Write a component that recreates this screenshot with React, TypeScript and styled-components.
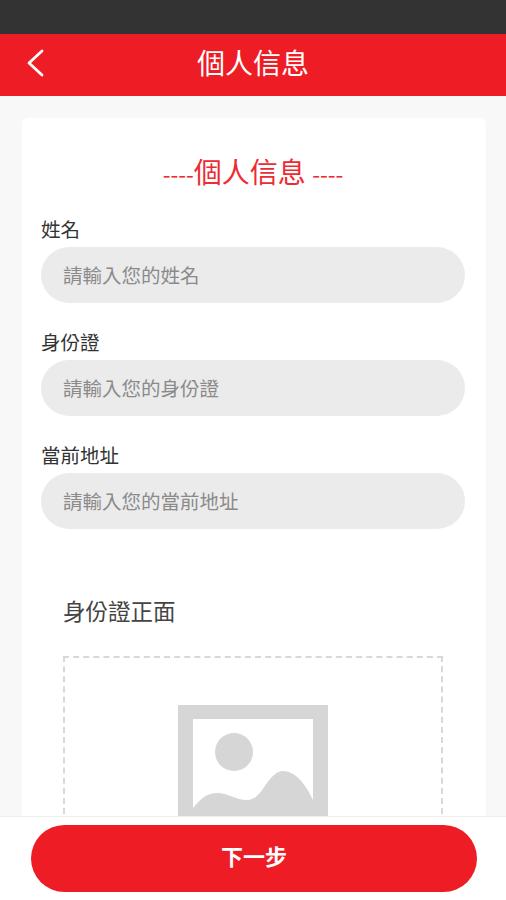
import React from "react";
import styled, { createGlobalStyle } from "styled-components";

const Global = createGlobalStyle`
  html, body { margin: 0; padding: 0; background: #f8f8f8; }
  * { box-sizing: border-box; }
`;
const FONT = `"Noto Sans CJK TC", "Noto Sans CJK SC", "Liberation Sans", sans-serif`;

const Page = styled.div`
  width: 506px; height: 900px; display: flex; flex-direction: column;
  overflow: hidden; background: #f8f8f8; font-family: ${FONT};
`;
const StatusBar = styled.div`flex: 0 0 34px; background: #333333;`;
const Header = styled.header`
  flex: 0 0 62px; background: #ee1c25; display: grid;
  grid-template-columns: 72px 1fr 72px; align-items: center;
`;
const BackButton = styled.div`display: flex; padding: 0 0 5px 25px; align-items: center;`;
const HeaderTitle = styled.h1`
  margin: 0; text-align: center; color: #fff; font-size: 28px; font-weight: 400;
  line-height: 36px; padding-bottom: 6px;
`;
const Scroll = styled.main`flex: 1 1 auto; min-height: 0; overflow: hidden; padding: 22px 20px 0 22px;`;
const Card = styled.section`
  background: #fff; border-radius: 6px; padding: 34px 21px 40px 19px;
`;
const CardTitle = styled.h2`
  margin: 0 0 22px; text-align: center; color: #ee2a33; font-size: 28px; font-weight: 400; line-height: 38px;
`;
const Dashes = styled.span`font-size: 22.5px;`;
const Field = styled.div`margin-bottom: 24px;`;
const Label = styled.div`color: #333; font-size: 19.5px; line-height: 30px; height: 33px;`;
const Input = styled.div`
  height: 56px; border-radius: 28px; background: #ebebeb; color: #8a8a8a;
  font-size: 19.5px; display: flex; align-items: center; padding: 0 22px 2px;
`;
const Upload = styled.div`margin: 65px 0 0 22px; width: 380px;`;
const UploadTitle = styled.div`color: #444; font-size: 22.5px; line-height: 32px; margin-bottom: 30px;`;
const DropZone = styled.div`
  height: 300px; border: 2px dashed #d8d8d8; display: flex; justify-content: center; padding-top: 47px;
`;
const Footer = styled.footer`
  flex: 0 0 84px; background: #fff; border-top: 1px solid #eeeeee; padding: 8px 29px 0 31px;
`;
const NextButton = styled.button`
  width: 100%; height: 67px; border: 0; border-radius: 34px; background: #ee1c25; color: #fff;
  font-family: ${FONT}; font-size: 22px; font-weight: 700; padding: 0 0 7px;
`;

const fields = [
  ["姓名", "請輸入您的姓名"],
  ["身份證", "請輸入您的身份證"],
  ["當前地址", "請輸入您的當前地址"],
];

export default function App() {
  return (
    <Page>
      <Global />
      <StatusBar />
      <Header>
        <BackButton>
          <svg width="20" height="30" viewBox="0 0 20 30" fill="none">
            <path d="M17 3 L4 15 L17 27" stroke="#fff" strokeWidth="2.8" strokeLinecap="round" strokeLinejoin="round" />
          </svg>
        </BackButton>
        <HeaderTitle>個人信息</HeaderTitle>
      </Header>
      <Scroll>
        <Card>
          <CardTitle><Dashes>----</Dashes>個人信息 <Dashes>----</Dashes></CardTitle>
          {fields.map(([label, placeholder]) => (
            <Field key={label}>
              <Label>{label}</Label>
              <Input>{placeholder}</Input>
            </Field>
          ))}
          <Upload>
            <UploadTitle>身份證正面</UploadTitle>
            <DropZone>
              <svg width="150" height="150" viewBox="0 0 150 150">
                <path fillRule="evenodd" fill="#d6d6d6" d="M0 0H150V150H0Z M15 14V103C23 93 30 88 39 88C50 88 58 95 69 95C79 95 83 86 89 78C94 71 99 66 105 66C118 66 128 80 135 95V14Z" />
                <circle cx="56" cy="47" r="19" fill="#d6d6d6" />
              </svg>
            </DropZone>
          </Upload>
        </Card>
      </Scroll>
      <Footer>
        <NextButton>下一步</NextButton>
      </Footer>
    </Page>
  );
}
